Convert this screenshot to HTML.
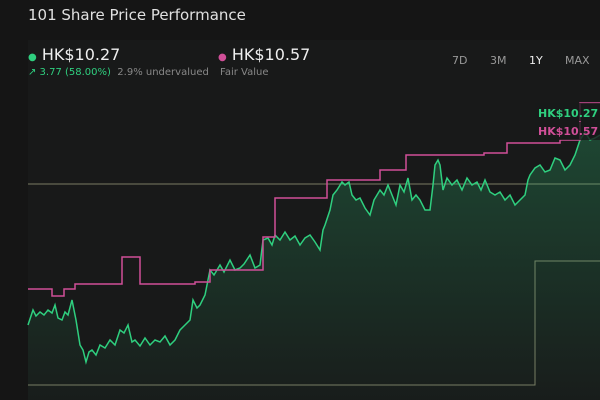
<!DOCTYPE html>
<html><head><style>
body{margin:0;width:600px;height:400px;background:#151515;font-family:"DejaVu Sans","Liberation Sans",sans-serif;overflow:hidden;position:relative;color:#e6e6e6}
.t{position:absolute;left:28px;top:6px;font-size:15px;color:#e0e0e0}
.p{position:absolute;font-size:16px;top:45px;color:#eee}
.s{position:absolute;top:67px;font-size:10px;color:#888}
.tab{position:absolute;top:54px;font-size:11px;color:#999}
</style></head><body>
<div style="position:absolute;left:28px;top:40px;width:572px;height:360px;background:#181919"></div>
<div class="t">101 Share Price Performance</div>
<div class="p" style="left:28px"><span style="color:#2fcf7f;font-size:10px">●</span> HK$10.27</div>
<div class="s" style="left:28px"><span style="color:#2fcf7f">↗ 3.77 (58.00%)</span> &nbsp;2.9% undervalued</div>
<div class="p" style="left:218px"><span style="color:#d04f98;font-size:10px">●</span> HK$10.57</div>
<div class="s" style="left:220px">Fair Value</div>
<div class="tab" style="left:452px">7D</div>
<div class="tab" style="left:490px">3M</div>
<div class="tab" style="left:529px;color:#eee">1Y</div>
<div class="tab" style="left:565px">MAX</div>
<svg width="600" height="400" style="position:absolute;left:0;top:0">
<defs><linearGradient id="g" x1="0" y1="0" x2="0" y2="1"><stop offset="0" stop-color="#2fcf7f" stop-opacity="0.25"/><stop offset="1" stop-color="#2fcf7f" stop-opacity="0.02"/></linearGradient></defs>
<line x1="28" y1="184" x2="600" y2="184" stroke="#7a7a62" stroke-width="1"/>
<polyline points="28,385 535,385 535,261 600,261" fill="none" stroke="#7a7a62" stroke-width="1"/>
<path d="M28,325 33,310 36,316 40,312 44,315 48,310 52,313 55,305 58,318 62,320 65,312 68,315 72,300 76,320 80,345 83,350 86,362 89,352 92,350 96,355 100,345 105,348 110,340 115,345 120,330 124,333 128,325 132,342 135,340 140,346 145,338 150,345 155,340 160,342 165,336 170,345 175,340 180,330 185,325 190,320 193,300 197,308 200,305 205,295 210,270 214,275 220,265 224,272 230,260 235,270 240,268 244,264 250,255 255,268 260,265 263,240 268,238 272,245 275,235 280,240 285,232 290,240 295,236 300,245 305,238 310,235 315,242 320,250 323,230 325,225 330,210 333,195 337,190 342,182 345,185 349,182 352,195 356,200 360,198 365,208 370,215 374,200 380,190 384,195 388,185 392,195 396,205 400,185 404,192 408,178 412,200 416,195 420,200 425,210 430,210 433,185 435,165 438,160 440,165 443,190 447,178 452,185 457,180 462,190 467,178 472,185 477,182 481,190 485,180 490,192 495,195 500,192 505,200 510,195 515,205 520,200 525,195 528,180 530,175 535,168 540,165 545,172 550,170 555,158 560,160 565,170 570,165 575,155 580,140 585,132 590,140 595,138 600,135 L600,400 L28,400Z" fill="url(#g)"/>
<polyline points="28,325 33,310 36,316 40,312 44,315 48,310 52,313 55,305 58,318 62,320 65,312 68,315 72,300 76,320 80,345 83,350 86,362 89,352 92,350 96,355 100,345 105,348 110,340 115,345 120,330 124,333 128,325 132,342 135,340 140,346 145,338 150,345 155,340 160,342 165,336 170,345 175,340 180,330 185,325 190,320 193,300 197,308 200,305 205,295 210,270 214,275 220,265 224,272 230,260 235,270 240,268 244,264 250,255 255,268 260,265 263,240 268,238 272,245 275,235 280,240 285,232 290,240 295,236 300,245 305,238 310,235 315,242 320,250 323,230 325,225 330,210 333,195 337,190 342,182 345,185 349,182 352,195 356,200 360,198 365,208 370,215 374,200 380,190 384,195 388,185 392,195 396,205 400,185 404,192 408,178 412,200 416,195 420,200 425,210 430,210 433,185 435,165 438,160 440,165 443,190 447,178 452,185 457,180 462,190 467,178 472,185 477,182 481,190 485,180 490,192 495,195 500,192 505,200 510,195 515,205 520,200 525,195 528,180 530,175 535,168 540,165 545,172 550,170 555,158 560,160 565,170 570,165 575,155 580,140 585,132 590,140 595,138 600,135" fill="none" stroke="#2fcf7f" stroke-width="1.5"/>
<polyline points="28,289 52,289 52,296 64,296 64,289 75,289 75,284 122,284 122,257 140,257 140,284 195,284 195,282 210,282 210,270 263,270 263,237 275,237 275,198 327,198 327,180 380,180 380,170 406,170 406,155 484,155 484,153 507,153 507,143 560,143 560,140 580,140 580,103 600,103" fill="none" stroke="#d04f98" stroke-width="1.5"/>
<rect x="535" y="103" width="65" height="18" fill="#181919" opacity="0.8"/>
<rect x="535" y="122" width="65" height="18" fill="#181919" opacity="0.8"/>
<text x="538" y="117" font-size="11" font-weight="bold" fill="#2fcf7f" font-family="DejaVu Sans">HK$10.27</text>
<text x="538" y="135" font-size="11" font-weight="bold" fill="#d04f98" font-family="DejaVu Sans">HK$10.57</text>
</svg>
</body></html>
